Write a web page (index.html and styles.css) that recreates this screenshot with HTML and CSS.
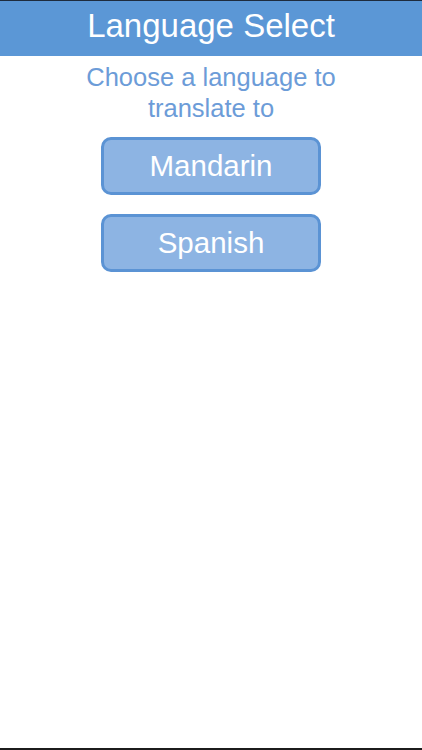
FILE: index.html
```html
<!DOCTYPE html>
<html lang="en">
<head>
  <meta charset="UTF-8" />
  <meta name="viewport" content="width=device-width, initial-scale=1.0" />
  <title>Language Select</title>
  <link rel="stylesheet" href="styles.css">
</head>
<body>
  <div class="screen">
    <header class="title-bar">
      <h1>Language Select</h1>
    </header>

    <p class="prompt">Choose a language to<br>translate to</p>

    <div class="languages">
      <button type="button" class="lang-btn">Mandarin</button>
      <button type="button" class="lang-btn">Spanish</button>
    </div>
  </div>
</body>
</html>
```

FILE: styles.css
```css
html, body {
  margin: 0;
  padding: 0;
}
body {
  font-family: "Liberation Sans", Arial, sans-serif;
  background: #fff;
}
.screen {
  min-height: 100vh;
  box-sizing: border-box;
  border-top: 1px solid #1e2b3d;
  border-bottom: 2px solid #1c1c1c;
  display: flex;
  flex-direction: column;
  align-items: center;
}
.title-bar {
  align-self: stretch;
  box-sizing: border-box;
  height: 55px;
  padding-bottom: 7px;
  background-color: #5b97d6;
  display: flex;
  align-items: center;
  justify-content: center;
}
.title-bar h1 {
  margin: 0;
  color: #fff;
  font-size: 33px;
  font-weight: normal;
  line-height: 1;
}
.prompt {
  margin: 6px 0 0;
  color: #6c9cd8;
  font-size: 25.5px;
  line-height: 31px;
  text-align: center;
}
.languages {
  margin-top: 13px;
  display: flex;
  flex-direction: column;
  gap: 19px;
}
.lang-btn {
  width: 220px;
  height: 58px;
  border: 3px solid #5b93d4;
  border-radius: 10px;
  background-color: #8db4e3;
  color: #fff;
  font-family: inherit;
  font-size: 29.5px;
  cursor: pointer;
}
```
